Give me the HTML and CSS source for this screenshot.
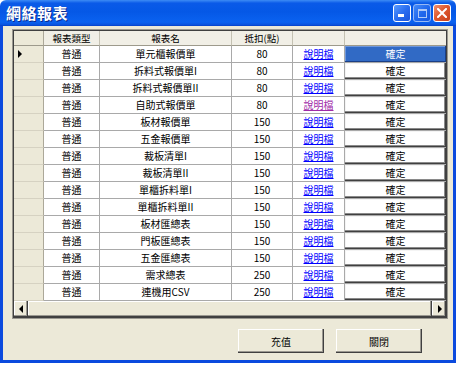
FILE: index.html
```html
<!DOCTYPE html>
<html lang="zh-Hant">
<head>
<meta charset="utf-8">
<title>網絡報表</title>
<link rel="stylesheet" href="styles.css">
</head>
<body>
<div class="window">
  <div class="titlebar">
    <span class="title">網絡報表</span>
    <div class="ctrls">
      <div class="ctrl min"><span class="bar"></span></div>
      <div class="ctrl max"><span class="box"></span></div>
      <div class="ctrl close">
        <svg width="10" height="10" viewBox="0 0 10 10"><path d="M1 1 L9 9 M9 1 L1 9" stroke="#fff" stroke-width="2" stroke-linecap="square"/></svg>
      </div>
    </div>
  </div>
  <div class="frame">
    <div class="grid">
      <div class="row head">
        <div class="rh"></div>
        <div class="hc">報表類型</div>
        <div class="hc">報表名</div>
        <div class="hc">抵扣(點)</div>
        <div class="hc"></div>
        <div class="hc last"></div>
      </div>
      <div class="row"><div class="rh"><span class="arrow"></span></div><div class="c">普通</div><div class="c">單元櫃報價單</div><div class="c">80</div><div class="c"><a class="lnk">說明檔</a></div><div class="bc sel">確定</div></div>
      <div class="row"><div class="rh"></div><div class="c">普通</div><div class="c">拆料式報價單I</div><div class="c">80</div><div class="c"><a class="lnk">說明檔</a></div><div class="bc">確定</div></div>
      <div class="row"><div class="rh"></div><div class="c">普通</div><div class="c">拆料式報價單II</div><div class="c">80</div><div class="c"><a class="lnk">說明檔</a></div><div class="bc">確定</div></div>
      <div class="row"><div class="rh"></div><div class="c">普通</div><div class="c">自助式報價單</div><div class="c">80</div><div class="c"><a class="lnk visited">說明檔</a></div><div class="bc">確定</div></div>
      <div class="row"><div class="rh"></div><div class="c">普通</div><div class="c">板材報價單</div><div class="c">150</div><div class="c"><a class="lnk">說明檔</a></div><div class="bc">確定</div></div>
      <div class="row"><div class="rh"></div><div class="c">普通</div><div class="c">五金報價單</div><div class="c">150</div><div class="c"><a class="lnk">說明檔</a></div><div class="bc">確定</div></div>
      <div class="row"><div class="rh"></div><div class="c">普通</div><div class="c">裁板清單I</div><div class="c">150</div><div class="c"><a class="lnk">說明檔</a></div><div class="bc">確定</div></div>
      <div class="row"><div class="rh"></div><div class="c">普通</div><div class="c">裁板清單II</div><div class="c">150</div><div class="c"><a class="lnk">說明檔</a></div><div class="bc">確定</div></div>
      <div class="row"><div class="rh"></div><div class="c">普通</div><div class="c">單櫃拆料單I</div><div class="c">150</div><div class="c"><a class="lnk">說明檔</a></div><div class="bc">確定</div></div>
      <div class="row"><div class="rh"></div><div class="c">普通</div><div class="c">單櫃拆料單II</div><div class="c">150</div><div class="c"><a class="lnk">說明檔</a></div><div class="bc">確定</div></div>
      <div class="row"><div class="rh"></div><div class="c">普通</div><div class="c">板材匯總表</div><div class="c">150</div><div class="c"><a class="lnk">說明檔</a></div><div class="bc">確定</div></div>
      <div class="row"><div class="rh"></div><div class="c">普通</div><div class="c">門板匯總表</div><div class="c">150</div><div class="c"><a class="lnk">說明檔</a></div><div class="bc">確定</div></div>
      <div class="row"><div class="rh"></div><div class="c">普通</div><div class="c">五金匯總表</div><div class="c">150</div><div class="c"><a class="lnk">說明檔</a></div><div class="bc">確定</div></div>
      <div class="row"><div class="rh"></div><div class="c">普通</div><div class="c">需求總表</div><div class="c">250</div><div class="c"><a class="lnk">說明檔</a></div><div class="bc">確定</div></div>
      <div class="row"><div class="rh"></div><div class="c">普通</div><div class="c">連機用CSV</div><div class="c">250</div><div class="c"><a class="lnk">說明檔</a></div><div class="bc">確定</div></div>
      <div class="hscroll">
        <div class="sbtn"><span class="tri left"></span></div>
        <div class="thumb"></div>
        <div class="sbtn"><span class="tri right"></span></div>
      </div>
    </div>
    <div class="actions">
      <button class="btn">充值</button>
      <button class="btn">關閉</button>
    </div>
  </div>
</div>
</body>
</html>
```
FILE: styles.css
```css
* { box-sizing: border-box; }
html, body { margin: 0; padding: 0; }
body {
  background: #ffffff;
  width: 458px;
  height: 366px;
  overflow: hidden;
  font-family: "Noto Sans CJK TC", "Liberation Sans", sans-serif;
}
.window {
  width: 456px;
  display: flex;
  flex-direction: column;
}
.titlebar {
  height: 26px;
  display: flex;
  align-items: center;
  justify-content: space-between;
  padding: 0 5px 0 6px;
  border-radius: 6px 6px 0 0;
  background: linear-gradient(to bottom, #3d8cf5 0%, #0a5ae8 12%, #0558e6 45%, #0a62f0 85%, #0a55e0 94%, #0540c8 100%);
}
.title {
  color: #fff;
  font-weight: bold;
  font-size: 15px;
  line-height: 26px;
  text-shadow: 1px 1px 0 #0b2a8c;
  letter-spacing: 0.5px;
}
.ctrls { display: flex; gap: 2px; }
.ctrl {
  width: 18px;
  height: 18px;
  border: 1px solid #fff;
  border-radius: 3px;
  display: flex;
  align-items: center;
  justify-content: center;
  position: relative;
}
.min, .max {
  background: linear-gradient(135deg, #5a9cff 0%, #2a6ef0 50%, #1a55dc 100%);
}
.max { border-color: #c6d8f8; opacity: 0.75; }
.min .bar {
  position: absolute;
  left: 4px;
  bottom: 4px;
  width: 6px;
  height: 3px;
  background: #fff;
}
.max .box {
  width: 9px;
  height: 9px;
  border: 1px solid #e6eefc;
  border-top-width: 2px;
}
.close {
  background: linear-gradient(135deg, #f09070 0%, #e05a30 45%, #c8401a 100%);
}
.frame {
  height: 337px;
  background: #ece9d8;
  border: 3px solid #0b4ade;
  border-top: 0;
  padding: 4px 6px 0 10px;
  display: flex;
  flex-direction: column;
}
.grid {
  width: 434px;
  border: 1px solid #404040;
  box-shadow: 0 0 0 1px #9a9890;
  background: #ece9d8;
  display: flex;
  flex-direction: column;
}
.row {
  display: grid;
  grid-template-columns: 30px 56px 132px 61px 52px 101px;
  height: 17px;
  font-size: 10px;
  line-height: 16px;
  color: #000;
}
.row.head { height: 15px; line-height: 14px; font-size: 9.5px; }
.rh {
  background: #ece9d8;
  border-right: 1px solid #aca899;
  border-bottom: 1px solid #d6d2c2;
  position: relative;
}
.head .rh { border-bottom: 1px solid #9d9a8c; }
.hc {
  background: #f1efe6;
  text-align: center;
  border-right: 1px solid #c4c1b2;
  border-bottom: 1px solid #9d9a8c;
}
.hc.last { border-right: 0; }
.arrow {
  position: absolute;
  left: 4px;
  top: 4px;
  width: 0;
  height: 0;
  border-left: 4px solid #000;
  border-top: 4px solid transparent;
  border-bottom: 4px solid transparent;
}
.c {
  background: #fff;
  text-align: center;
  border-right: 1px solid #a9a9a9;
  border-bottom: 1px solid #a9a9a9;
  white-space: nowrap;
  overflow: hidden;
}
.lnk {
  color: #0000ff;
  text-decoration: underline;
}
.lnk.visited { color: #a02aa8; }
.bc {
  background: #fff;
  text-align: center;
  border-bottom: 1px solid #a9a9a9;
  box-shadow: inset -1px -1px 0 #404040, inset -2px -2px 0 #8a8a8a, inset 1px 1px 0 #f4f4f4;
}
.bc.sel {
  background: #316ac5;
  color: #fff;
  box-shadow: inset -1px -1px 0 #1a3f86, inset 1px 1px 0 #6f98dc;
}
.hscroll {
  height: 16px;
  display: flex;
}
.sbtn {
  width: 14px;
  height: 16px;
  background: #ece9d8;
  box-shadow: inset -1px -1px 0 #404040, inset -2px -2px 0 #9a9890, inset 1px 1px 0 #fff;
  display: flex;
  align-items: center;
  justify-content: center;
}
.thumb {
  flex: 1;
  background: #ece9d8;
  box-shadow: inset -1px -1px 0 #404040, inset -2px -2px 0 #9a9890, inset 1px 1px 0 #fff;
}
.tri { width: 0; height: 0; border-top: 4px solid transparent; border-bottom: 4px solid transparent; }
.tri.left { border-right: 4px solid #000; margin-right: 1px; }
.tri.right { border-left: 4px solid #000; margin-left: 1px; }
.actions {
  display: flex;
  justify-content: flex-end;
  gap: 12px;
  margin-top: 11px;
  padding-right: 25px;
}
.btn {
  width: 86px;
  height: 24px;
  margin: 0;
  padding: 0;
  border: 0;
  background: #ece9d8;
  font-family: "Noto Sans CJK TC", sans-serif;
  font-size: 10px;
  color: #000;
  box-shadow: inset -1px -1px 0 #404040, inset -2px -2px 0 #9a9890, inset 1px 1px 0 #fff;
}
```
